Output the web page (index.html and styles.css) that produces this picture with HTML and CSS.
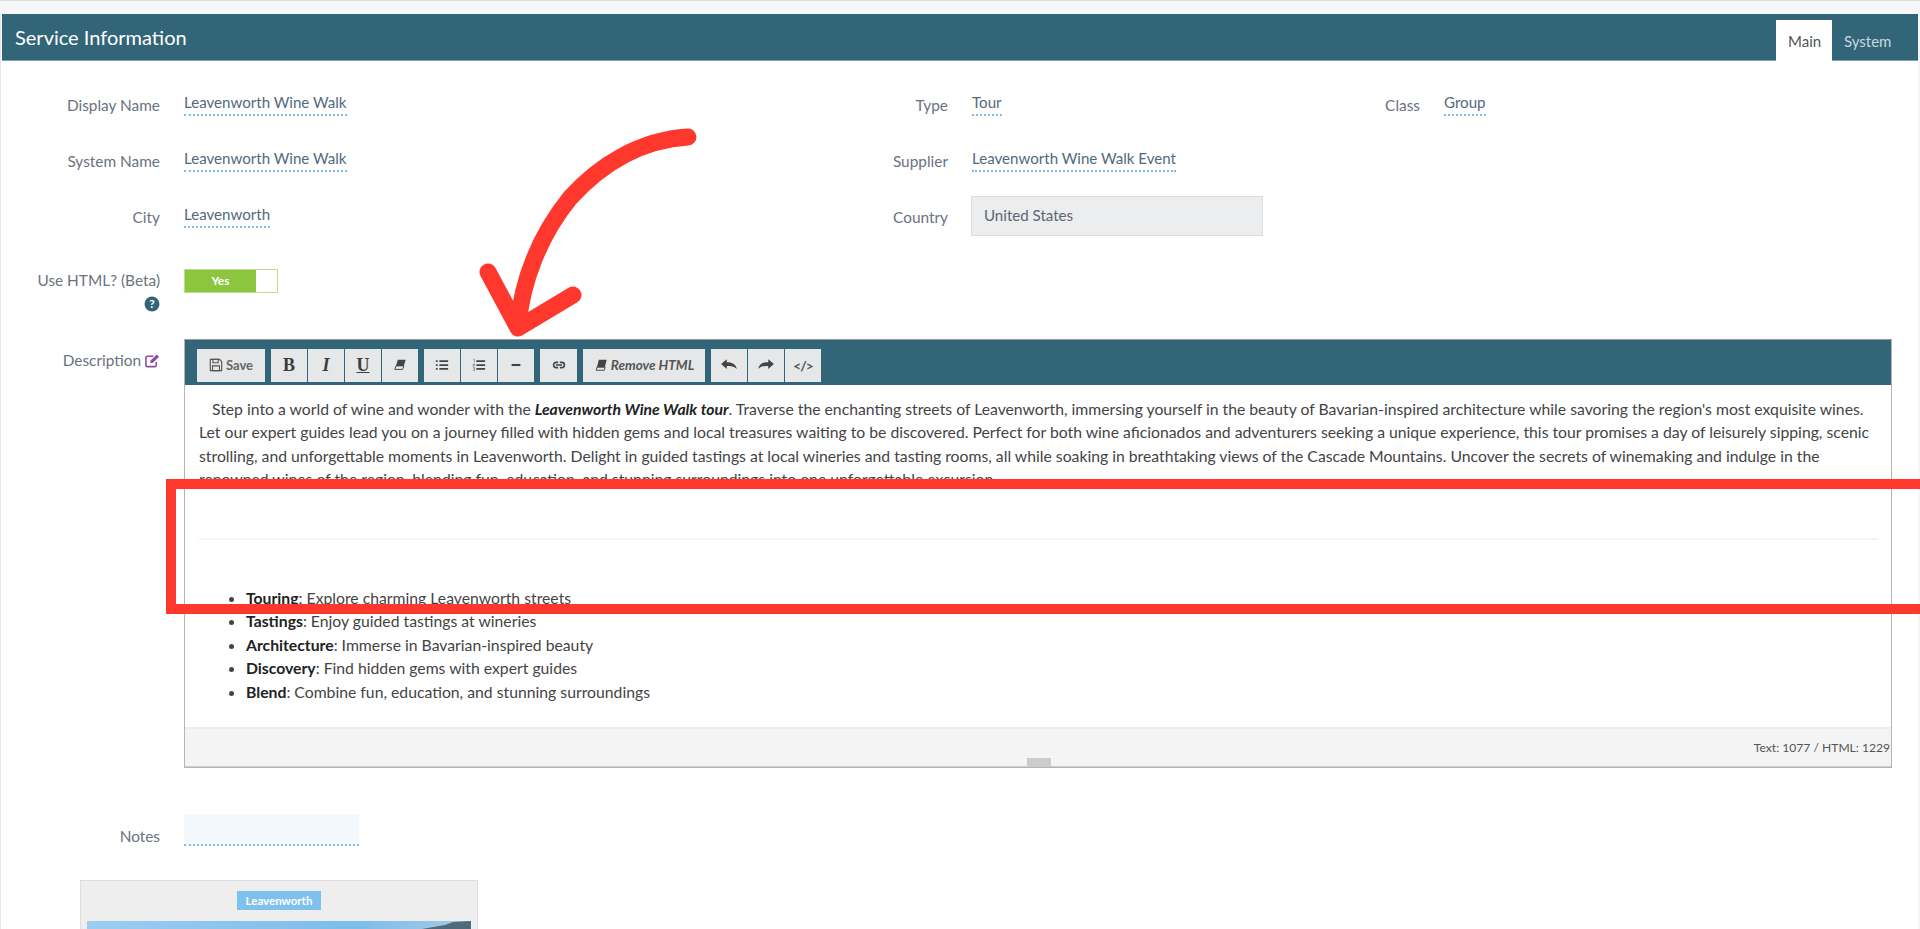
FILE: index.html
```html
<!DOCTYPE html>
<html lang="en">
<head>
  <meta charset="UTF-8">
  <title>Service Information</title>
  <link rel="stylesheet" href="styles.css">
</head>
<body>
  <section class="panel">
    <header class="panel-head">
      <h1>Service Information</h1>
      <ul class="tabs">
        <li class="active">Main</li>
        <li>System</li>
      </ul>
    </header>

    <div class="fields">
      <label>Display Name</label>
      <div class="cell"><span class="editable">Leavenworth Wine Walk</span></div>
      <label>Type</label>
      <div class="cell"><span class="editable">Tour</span></div>
      <label>Class</label>
      <div class="cell"><span class="editable">Group</span></div>

      <label>System Name</label>
      <div class="cell"><span class="editable">Leavenworth Wine Walk</span></div>
      <label>Supplier</label>
      <div class="cell span-3"><span class="editable">Leavenworth Wine Walk Event</span></div>

      <label>City</label>
      <div class="cell"><span class="editable">Leavenworth</span></div>
      <label>Country</label>
      <div class="cell span-3"><div class="readonly">United States</div></div>
    </div>

    <div class="row row-html">
      <label>Use HTML? (Beta)
        <svg class="help" viewBox="0 0 16 16"><circle cx="8" cy="8" r="7.5" fill="#336578"/><text x="8" y="12.4" text-anchor="middle" class="help-mark">?</text></svg>
      </label>
      <div class="toggle"><span class="toggle-on">Yes</span><span class="toggle-knob"></span></div>
    </div>

    <div class="row row-desc">
      <label>Description
        <svg class="edit" viewBox="0 0 16 16"><path d="M12 9.500V13a1.500 1.500 0 0 1-1.500 1.500h-8A1.500 1.500 0 0 1 1 13V5a1.500 1.500 0 0 1 1.500-1.500H9" fill="none" stroke="#8a4f9e" stroke-width="1.700"/><path d="M6 8l6.500-6.500 2.500 2.500L8.500 10.500 5.500 11z" fill="#8a4f9e"/></svg>
      </label>
      <div class="editor">
        <div class="toolbar">
          <div class="btn-group"><button class="btn btn-save"><svg class="ico" viewBox="0 0 16 16"><path d="M1.500 1.500h10.500l2.500 2.500v10.500h-13z" fill="none" stroke="#555" stroke-width="1.300"/><path d="M4.500 1.500h6v4h-6zM4 9h8v5.500H4z" fill="none" stroke="#555" stroke-width="1.200"/></svg>Save</button></div>
          <div class="btn-group">
            <button class="btn btn-sq fmt-b">B</button>
            <button class="btn btn-sq fmt-i">I</button>
            <button class="btn btn-sq fmt-u">U</button>
            <button class="btn btn-sq"><svg class="ico" viewBox="0 0 16 16"><path d="M5.500 2h9L11 13H2z" fill="#444"/><path d="M3.400 9h9L11 13H2z" fill="#e6e7e9" stroke="#444"/></svg></button>
          </div>
          <div class="btn-group">
            <button class="btn btn-sq"><svg class="ico" viewBox="0 0 16 16"><path d="M1 2.500h2v2H1zM1 7h2v2H1zM1 11.500h2v2H1zM5 2.500h10v2H5zM5 7h10v2H5zM5 11.500h10v2H5z" fill="#444"/></svg></button>
            <button class="btn btn-sq"><svg class="ico" viewBox="0 0 16 16"><path d="M5 2.500h10v2H5zM5 7h10v2H5zM5 11.500h10v2H5z" fill="#444"/><path d="M1.500 1.500h1.200v3.500M1 7h2v1.200H1.200v1H3M1 11h2v3.200H1M1.500 12.600H3" fill="none" stroke="#666" stroke-width=".7"/></svg></button>
            <button class="btn btn-sq"><svg class="ico" viewBox="0 0 16 16"><rect x="3" y="6.800" width="10" height="2.400" fill="#444"/></svg></button>
          </div>
          <div class="btn-group"><button class="btn btn-sq btn-link"><svg class="ico" viewBox="0 0 16 16"><path d="M7 5H4.800a3 3 0 0 0 0 6H7M9 5h2.200a3 3 0 0 1 0 6H9M4.500 8h7" fill="none" stroke="#444" stroke-width="1.800"/></svg></button></div>
          <div class="btn-group"><button class="btn btn-remove"><svg class="ico" viewBox="0 0 16 16"><path d="M5.500 2h9L11.500 14H2.500z" fill="#444"/><path d="M3.300 10.500h9.500l-1 3.500H2.500z" fill="#e6e7e9" stroke="#444"/></svg>Remove HTML</button></div>
          <div class="btn-group">
            <button class="btn btn-sq"><svg class="ico ico-wide" viewBox="0 0 16 16"><path d="M1 7L6 2.800v2.700c4.800-.2 8 1.700 9 6-2.300-2.300-5-3-9-2.600v2.600z" fill="#444"/></svg></button>
            <button class="btn btn-sq"><svg class="ico ico-wide" viewBox="0 0 16 16"><path d="M15 7L10 2.800v2.700c-4.800-.2-8 1.700-9 6 2.300-2.300 5-3 9-2.600v2.600z" fill="#444"/></svg></button>
            <button class="btn btn-sq btn-code">&lt;/&gt;</button>
          </div>
        </div>
        <div class="editor-body">
          <p>Step into a world of wine and wonder with the <b><i>Leavenworth Wine Walk tour</i></b>. Traverse the enchanting streets of Leavenworth, immersing yourself in the beauty of Bavarian-inspired architecture while savoring the region's most exquisite wines. Let our expert guides lead you on a journey filled with hidden gems and local treasures waiting to be discovered. Perfect for both wine aficionados and adventurers seeking a unique experience, this tour promises a day of leisurely sipping, scenic strolling, and unforgettable moments in Leavenworth. Delight in guided tastings at local wineries and tasting rooms, all while soaking in breathtaking views of the Cascade Mountains. Uncover the secrets of winemaking and indulge in the renowned wines of the region, blending fun, education, and stunning surroundings into one unforgettable excursion.</p>
          <hr>
          <ul>
            <li><b>Touring</b>: Explore charming Leavenworth streets</li>
            <li><b>Tastings</b>: Enjoy guided tastings at wineries</li>
            <li><b>Architecture</b>: Immerse in Bavarian-inspired beauty</li>
            <li><b>Discovery</b>: Find hidden gems with expert guides</li>
            <li><b>Blend</b>: Combine fun, education, and stunning surroundings</li>
          </ul>
        </div>
        <div class="statusbar">
          Text: 1077 / HTML: 1229
          <span class="resize-handle"></span>
        </div>
      </div>
    </div>

    <div class="row row-notes">
      <label>Notes</label>
      <div class="notes-box"></div>
    </div>

    <div class="photo-card">
      <span class="city-badge">Leavenworth</span>
      <div class="photo">
        <svg class="photo-hill" viewBox="0 0 384 8"><polygon points="335,8 358,4 366,1 384,0 384,8" fill="#4f6a7a"/></svg>
      </div>
    </div>
  </section>

  <!-- annotation on top of the screenshot -->
  <div class="callout-box"></div>
  <svg class="callout-arrow" viewBox="0 0 1920 929">
    <path d="M688 137C640 140 600 165 570 198C540 235 522 280 518 326M488 272L518 328L573 295" fill="none" stroke="#ff382d" stroke-width="17" stroke-linecap="round" stroke-linejoin="round"/>
  </svg>
</body>
</html>
```

FILE: styles.css
```css
* {
  box-sizing: border-box;
}

html, body {
  height: 929px;
  overflow: hidden;
}

body {
  margin: 0;
  padding: 13px 2px 0 2px;
  position: relative;
  background-color: #f6f7f9;
  border-top: 1px solid #dcdcdc;
  font-family: "Lato", sans-serif;
  font-size: 15.400px;
  color: #6b7280;
}

.panel {
  background-color: #fff;
  height: 915px;
  border-left: 1px solid #e6e6e6;
  margin-left: -2px;
  padding-left: 1px;
  overflow: hidden;
}

/* header */
.panel-head {
  height: 47px;
  background-color: #336578;
  border-bottom: 1px solid #7fa0ad;
  display: flex;
  justify-content: space-between;
  align-items: flex-end;
  padding: 0 0 0 13px;
}

.panel-head h1 {
  margin: 0;
  align-self: center;
  font-size: 20px;
  font-weight: 400;
  color: #fff;
}

.tabs {
  list-style: none;
  margin: 0 0 -1px;
  padding: 0;
  display: flex;
  font-size: 15px;
}

.tabs li {
  height: 41px;
  line-height: 42px;
  padding: 0 12px;
  color: #c6d8df;
}

.tabs .active {
  background-color: #fff;
  color: #555;
  width: 56px;
}

.tabs li:last-child {
  width: 86px;
}

/* form */
label {
  display: block;
  text-align: right;
  line-height: 20px;
  padding-top: 18px;
}

.fields {
  display: grid;
  grid-template-columns: 158px 664px 124px 437px 35px 1fr;
  grid-auto-rows: 56px;
  margin-top: 15px;
  padding-top: 1px;
}

.cell {
  padding: 15px 0 0 24px;
  font-size: 15.100px;
}

.span-3 {
  grid-column: span 3;
}

.editable {
  display: inline-block;
  line-height: 20px;
  padding-bottom: 2px;
  color: #54697c;
  border-bottom: 2px dotted #7cbcea;
}

.readonly {
  width: 292px;
  height: 40px;
  margin-top: -8px;
  margin-left: -1px;
  line-height: 37px;
  padding: 0 12px;
  background-color: #ecedef;
  border: 1px solid #ddd;
  color: #5b6570;
}

.row {
  display: grid;
  grid-template-columns: 158px 1fr;
  column-gap: 24px;
}

.row-html {
  margin-top: 6.500px;
  height: 87px;
}

.help {
  display: block;
  width: 16px;
  height: 16px;
  margin: 6px 0 0 auto;
}

.help-mark {
  font-size: 12px;
  font-weight: 700;
  fill: #fff;
}

.toggle {
  display: flex;
  width: 94px;
  height: 24px;
  margin-top: 17px;
  border: 1px solid #bcdc90;
  background-color: #fff;
}

.toggle-on {
  width: 71px;
  background-color: #8cc63f;
  color: #fff;
  font-size: 12px;
  font-weight: 700;
  line-height: 22px;
  text-align: center;
}

/* editor */
.row-desc label {
  padding-top: 11px;
}

.edit {
  width: 15px;
  height: 15px;
  vertical-align: -2px;
}

.editor {
  margin: 0 26px 0 0;
  border: 1px solid #b5b5b5;
  border-top-color: #999;
}

.toolbar {
  height: 45px;
  background-color: #336578;
  padding: 9px 0 0 12px;
  display: flex;
  gap: 6px;
}

.btn-group {
  display: flex;
  gap: 1px;
}

.btn {
  height: 33px;
  border: 0;
  padding: 0;
  background-color: #e6e7e9;
  color: #555;
  font-family: "Lato", sans-serif;
  font-size: 13px;
  display: flex;
  align-items: center;
  justify-content: center;
}

.btn-save {
  width: 68px;
  gap: 3px;
  font-weight: 700;
  color: #666;
}

.btn-sq {
  width: 36px;
}

.btn-link {
  width: 37px;
}

.btn-remove {
  width: 122px;
  gap: 3px;
  font-size: 13.500px;
  font-style: italic;
  font-weight: 700;
}

.btn-code {
  color: #555;
  font-size: 14px;
  font-weight: 700;
  letter-spacing: -1px;
}

.ico {
  width: 14px;
  height: 14px;
}

.ico-wide {
  width: 18px;
  height: 18px;
}

.fmt-b, .fmt-i, .fmt-u {
  font-family: "Liberation Serif", serif;
  font-size: 18px;
  color: #3c3c3c;
  font-weight: 700;
}

.fmt-i {
  font-style: italic;
}

.fmt-u {
  text-decoration: underline;
}

.editor-body {
  height: 342px;
  padding: 12px 13px 0 14px;
  line-height: 23.500px;
  font-size: 15.750px;
  color: #444;
}

.editor-body p {
  margin: 0;
  text-indent: 13px;
}

.editor-body b {
  color: #222;
}

.editor-body hr {
  height: 2px;
  margin: 47px 0 46px;
  border: 0;
  background-color: #f3f3f3;
  width: 1679px;
}

.editor-body ul {
  margin: 0;
  padding-left: 47px;
}

.statusbar {
  position: relative;
  height: 40px;
  background-color: #f4f4f4;
  border-top: 2px solid #ededed;
  border-bottom: 1px solid #ccc;
  padding-right: 1px;
  line-height: 38px;
  text-align: right;
  font-size: 12.100px;
  color: #555;
}

.resize-handle {
  position: absolute;
  left: 842px;
  bottom: 0;
  width: 24px;
  height: 8px;
  background-color: #ccc;
}

/* notes and photo */
.row-notes {
  margin-top: 46px;
}

.row-notes label {
  padding-top: 12px;
}

.notes-box {
  width: 175px;
  height: 32px;
  background-color: #f3f8fd;
  border-bottom: 2px dotted #7cbcea;
}

.photo-card {
  width: 398px;
  height: 300px;
  margin: 34px 0 0 78px;
  padding: 10px 6px 0;
  background-color: #eee;
  border: 1px solid #ddd;
  text-align: center;
}

.city-badge {
  display: inline-block;
  width: 84px;
  height: 19px;
  line-height: 19px;
  background-color: #7fc1ee;
  color: #fff;
  font-size: 11.500px;
  font-weight: 700;
  vertical-align: top;
}

.photo {
  height: 200px;
  margin-top: 11px;
  overflow: hidden;
  background: linear-gradient(90deg, #9ccdf1 0%, #7cbdea 70%, #a6cbe6 100%);
}

.photo-hill {
  display: block;
  width: 384px;
  height: 8px;
}

/* annotation */
.callout-box {
  position: absolute;
  left: 166px;
  top: 478px;
  width: 1764px;
  height: 135px;
  border: 10px solid #ff382d;
}

.callout-arrow {
  position: absolute;
  left: 0;
  top: -1px;
  width: 1920px;
  height: 929px;
}
```
